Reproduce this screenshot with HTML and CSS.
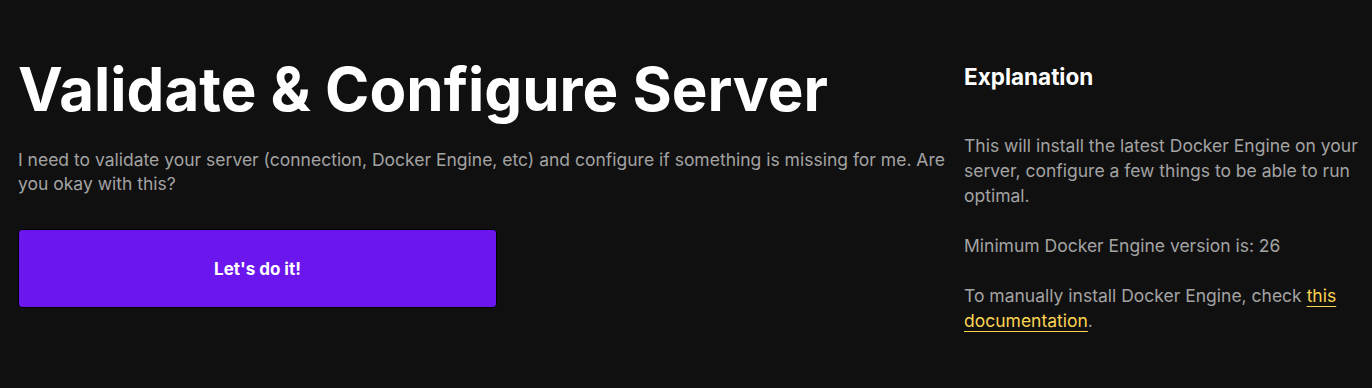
FILE: index.html
```html
<!DOCTYPE html>
<html lang="en">
<head>
<meta charset="utf-8">
<title>Validate & Configure Server</title>
<link rel="stylesheet" href="styles.css">
</head>
<body>
<main class="boarding">
  <section class="main-col">
    <h1 class="title">Validate &amp; Configure Server</h1>
    <p class="lead">I need to validate your server (connection, Docker Engine, etc) and configure if something is missing for me. Are you okay with this?</p>
    <button class="btn-primary" type="button">Let's do it!</button>
  </section>
  <aside class="explain">
    <h2 class="explain-title">Explanation</h2>
    <div class="explain-body">
      <p>This will install the latest Docker Engine on your server, configure a few things to be able to run optimal.</p>
      <p>Minimum Docker Engine version is: 26</p>
      <p>To manually install Docker Engine, check <a class="link" href="#">this documentation</a>.</p>
    </div>
  </aside>
</main>
</body>
</html>
```
FILE: styles.css
```css
* { box-sizing: border-box; }
html, body { margin: 0; padding: 0; background: #101010; }
body {
  font-family: Inter, "Noto Sans", sans-serif;
  color: #a3a3a3;
  font-size: 17.5px;
  line-height: 24px;
}
.boarding {
  display: flex;
  gap: 16px;
  padding: 49px 10px 0 18px;
}
.main-col {
  width: 930px;
  flex: none;
}
.title {
  margin: 0;
  font-size: 60px;
  line-height: 80px;
  font-weight: 700;
  color: #ffffff;
}
.lead {
  margin: 19px 0 0;
}
.btn-primary {
  display: flex;
  align-items: center;
  justify-content: center;
  margin-top: 33px;
  width: 479px;
  height: 79px;
  background: #6b16ed;
  color: #ffffff;
  border: 1px solid #000;
  border-radius: 4px;
  font-family: inherit;
  font-size: 17px;
  font-weight: 700;
}
.explain {
  flex: 1;
  padding-top: 14px;
}
.explain-title {
  margin: 0;
  font-size: 22.5px;
  line-height: 28px;
  font-weight: 700;
  color: #ffffff;
}
.explain-body {
  padding-top: 42px;
  line-height: 25px;
}
.explain-body p {
  margin: 0 0 25px;
}
.link {
  color: #fcd452;
  text-decoration: underline;
  text-underline-offset: 4px;
}
```
